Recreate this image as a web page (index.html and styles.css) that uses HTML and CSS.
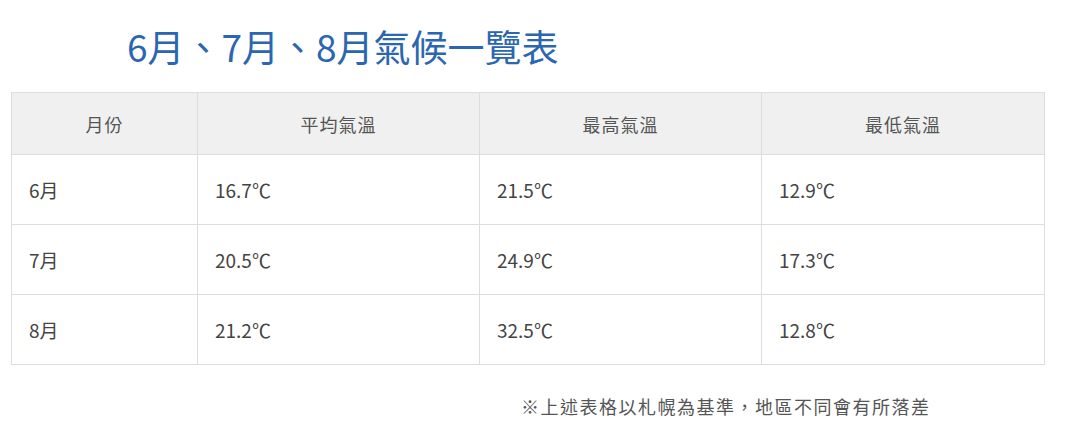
FILE: index.html
```html
<!DOCTYPE html>
<html lang="zh-Hant">
<head>
<meta charset="utf-8">
<link rel="stylesheet" href="styles.css">
</head>
<body>
<div class="page">
  <h2 class="title">6月、7月、8月氣候一覽表</h2>
  <table class="climate">
    <colgroup>
      <col class="c1"><col class="c2"><col class="c3"><col class="c4">
    </colgroup>
    <thead>
      <tr><th>月份</th><th>平均氣溫</th><th>最高氣溫</th><th>最低氣溫</th></tr>
    </thead>
    <tbody>
      <tr><td>6月</td><td>16.7℃</td><td>21.5℃</td><td>12.9℃</td></tr>
      <tr><td>7月</td><td>20.5℃</td><td>24.9℃</td><td>17.3℃</td></tr>
      <tr><td>8月</td><td>21.2℃</td><td>32.5℃</td><td>12.8℃</td></tr>
    </tbody>
  </table>
  <p class="note">※上述表格以札幌為基準，地區不同會有所落差</p>
</div>
</body>
</html>
```

FILE: styles.css
```css
html, body {
  margin: 0;
  padding: 0;
  background: #ffffff;
}
body {
  font-family: "Noto Sans CJK TC", "Noto Sans", sans-serif;
  color: #444444;
}
.page {
  padding: 20px 36px 0 11px;
}
.title {
  margin: 0 0 20px 116px;
  font-size: 37px;
  font-weight: 400;
  line-height: 52px;
  color: #2b66b1;
}
.climate {
  width: 1033px;
  border-collapse: collapse;
  table-layout: fixed;
  font-size: 19px;
}
.c1 { width: 186px; }
.c2 { width: 282px; }
.c3 { width: 282px; }
.c4 { width: 283px; }
.climate th,
.climate td {
  border: 1px solid #dddddd;
  font-weight: 400;
}
.climate th {
  background: #f0f0f0;
  height: 59px;
  text-align: center;
  color: #555555;
  font-size: 18px;
  letter-spacing: 1px;
}
.climate td {
  height: 69px;
  padding: 0 17px;
  text-align: left;
  color: #444444;
}
.note {
  margin: 28px 0 0 510px;
  font-size: 18px;
  color: #555555;
  letter-spacing: 1.5px;
}
```
